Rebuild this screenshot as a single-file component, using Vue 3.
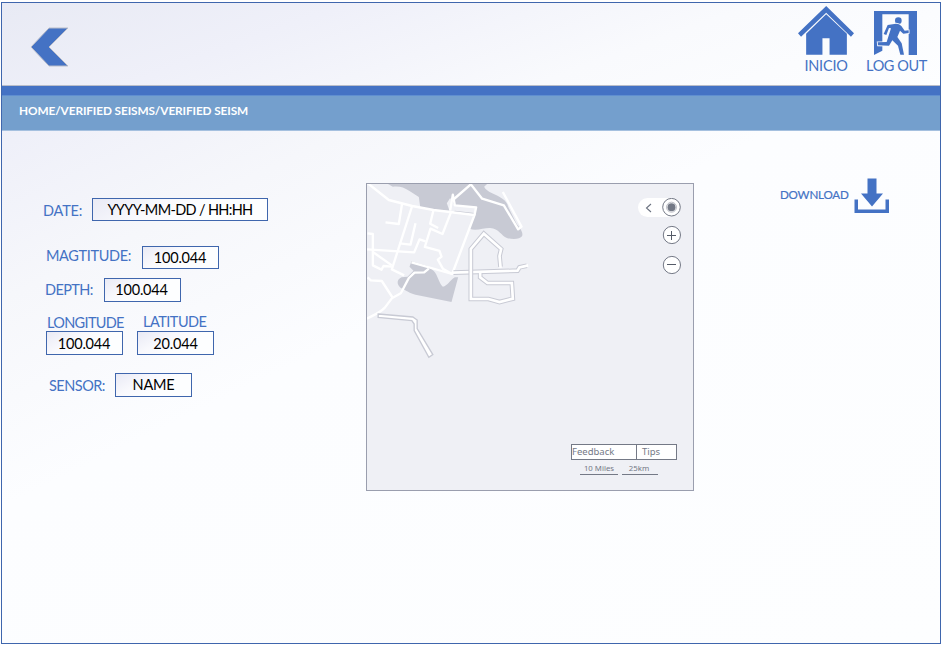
<script setup>
const roads = [
  'M20 12L88 66L158 84L222 96L345 111L278 288L156 253',
  'M128 75L118 138L78 133',
  'M158 84L97 274L134 292',
  'M168 136L153 200L120 196',
  'M20 214L164 223L180 184L198 190',
  'M24 166L40 168L40 262L66 275L72 264L97 266',
  'M40 222L97 262',
  'M222 96L212 137L236 150',
  'M274 104L249 168L213 152L196 207L240 219L246 236L235 245L250 272L278 288',
  'M272 98L280 50L286 82L350 88L345 111',
  'M280 66L334 19L368 62L433 82L476 154L486 146L430 42',
  'M208 272L194 283L165 284L148 300L124 346L97 361L76 389C60 406 40 412 22 422',
  'M24 298L34 307L67 309L100 360',
]
const outlined = [
  'M282 284L474 278L480 268L502 263',
  'M423 266L420 234L425 213L373 167L334 213L334 363L387 363L420 372L460 362L457 315L384 315L362 298L362 286',
]
</script>

<template>
  <div class="frame">
    <header class="top">
      <svg class="back" viewBox="0 0 40 40" width="40" height="40">
        <path d="M19 1H38L19 20L38 39H19L1 20Z" fill="#4472c4" stroke="#b9bdc9" stroke-width="1" />
      </svg>
      <nav class="nav">
        <div class="item home">
          <svg width="56" height="49" viewBox="0 0 165 147" preserveAspectRatio="none">
            <path d="M0 82L83 0L165 82L156 92L83 20L9 92Z" />
            <path d="M24 83L83 25L144 83V146H93V97H72V146H24Z" />
          </svg>
          <span>INICIO</span>
        </div>
        <div class="item logout">
          <svg width="43" height="44" viewBox="279 33 129 132">
            <path d="M279 33H408V165H383V43H304V152L279 165Z" />
            <g class="runner">
              <circle cx="352" cy="62" r="10" />
              <path d="M320 75L345 71Q355 71 361 78L371 92L383 91V99L367 101L357 92L349 111L362 130L369 164H358L351 137L334 121L324 137L291 136L290 127L317 126L330 85L324 84L316 105L308 102Z" />
            </g>
          </svg>
          <span>LOG OUT</span>
        </div>
      </nav>
    </header>
    <div class="stripe"></div>
    <div class="crumb"><span>HOME/VERIFIED SEISMS/VERIFIED SEISM</span></div>

    <main class="main">
      <section class="form">
        <div class="row date"><label>DATE:</label><div class="box"><span>YYYY-MM-DD / HH:HH</span></div></div>
        <div class="row mag"><label>MAGTITUDE:</label><div class="box"><span>100.044</span></div></div>
        <div class="row depth"><label>DEPTH:</label><div class="box"><span>100.044</span></div></div>
        <div class="coords">
          <div class="col lon"><label>LONGITUDE</label><div class="box"><span>100.044</span></div></div>
          <div class="col lat"><label>LATITUDE</label><div class="box"><span>20.044</span></div></div>
        </div>
        <div class="row sensor"><label>SENSOR:</label><div class="box"><span>NAME</span></div></div>
      </section>

      <section class="map">
        <svg class="terrain" width="326" height="306" viewBox="1 1 326 306">
          <g transform="translate(-6.5 -5) scale(.33333)">
            <path fill="#c8cad4" d="M80 15L100 26C122 24 132 28 150 39L178 57L182 86L222 96L272 98L300 84L286 82L350 88L330 152C350 160 374 149 392 150C418 151 426 174 442 180C460 185 482 184 488 174C492 160 478 148 470 135L446 86C442 66 420 56 398 46Q378 36 374 26L386 15Z" />
            <path fill="#eff0f5" d="M272 60L262 76L270 98L282 98L300 85L284 80Z" />
            <path fill="#c8cad4" d="M286 98L345 105L340 112L282 103Z" />
            <path fill="#c8cad4" d="M156 250L204 264L222 278C236 292 236 312 250 326C264 324 270 308 286 298L296 298L276 372L168 350C148 346 140 336 124 330C110 320 112 304 126 298L144 296L162 278L150 266Z" />
            <path v-for="d in roads" :key="d" :d="d" class="road" />
            <g v-for="d in outlined" :key="d">
              <path :d="d" class="casing" /><path :d="d" class="core" />
            </g>
            <path d="M56 408L160 417L173 426V452L220 530L208 538L164 458V438L157 428L56 418Z" fill="#fff" stroke="#c8cad4" stroke-width="4" />
          </g>
        </svg>
        <div class="controls">
          <svg width="44" height="20" viewBox="0 0 44 20">
            <path d="M9.500 0H33V19H9.500A9.500 9.500 0 0 1 9.500 0Z" fill="#fff" />
            <path d="M13 6L8.500 10L13 14" fill="none" stroke="#6b7280" stroke-width="1.100" />
            <circle cx="33.500" cy="9.200" r="8.800" class="ring" />
            <circle cx="33.500" cy="9.200" r="5" fill="#fff" stroke="#a0a4ae" stroke-width=".7" />
            <circle cx="33.500" cy="9.200" r="4" fill="#747986" />
          </svg>
          <svg class="zoom" width="20" height="20" viewBox="0 0 20 20">
            <circle cx="9.900" cy="10" r="8.600" class="ring" /><path d="M5 10.500H14M9.500 6V15" class="sign" />
          </svg>
          <svg class="zoom out" width="20" height="20" viewBox="0 0 20 20">
            <circle cx="9.900" cy="10" r="8.600" class="ring" /><path d="M5 9.500H14" class="sign" />
          </svg>
        </div>
        <div class="legend">
          <div class="links"><span class="feedback">Feedback</span><span class="tips">Tips</span></div>
          <div class="scale"><span class="miles">10 Miles</span><span class="km">25km</span></div>
        </div>
      </section>

      <section class="download">
        <span>DOWNLOAD</span>
        <svg width="36" height="36" viewBox="0 0 36 36">
          <path d="M13.500 .5H22.500V15.500H29L18 28.500L7 15.500H13.500Z" />
          <path d="M.5 21.500H4V31.500H31.500V21.500H35V35H.5Z" />
        </svg>
      </section>
    </main>
  </div>
</template>

<style>
body { margin: 0; background: #fff; }
</style>

<style scoped>
.frame {
  box-sizing: border-box;
  width: 940px;
  height: 642px;
  margin: 2px 0 0 1px;
  border: 1px solid #3f66ad;
  background: linear-gradient(154deg, #e8eaf4 0%, #eff0f9 13%, #f6f7fb 27%, #fcfdff 46%, #fdfeff 100%);
  font-family: Lato, "Liberation Sans", sans-serif;
  color: #4472c4;
  display: flow-root;
  white-space: nowrap;
}
.top { height: 82px; display: flex; justify-content: space-between; background: linear-gradient(160deg, #e8eaf4 0%, #eff0f9 30%, #f9fafd 65%, #fdfeff 100%); }
.back { margin: 24px 0 0 28px; }
.nav { display: flex; margin-right: 13px; gap: 12px; }
.nav svg { fill: #4472c4; display: block; }
.item { display: flex; flex-direction: column; align-items: center; font-size: 14.500px; letter-spacing: -.4px; line-height: 18px; }
.home { padding-top: 3px; }
.home span { margin-top: 2px; letter-spacing: -.2px; }
.logout { padding-top: 8px; }
.logout svg { margin-right: 3px; }
.logout span { margin-top: 2px; }
.runner { stroke: #f9fafd; stroke-width: 5px; paint-order: stroke; }
.stripe { height: 9px; background: #4472c4; border-top: 1px solid #b9bdc9; }
.crumb {
  box-sizing: border-box; height: 36px; padding-left: 17px;
  background: #749fcd; border-top: 1px solid #5f8ed0; border-bottom: 1px solid #a5c0df;
  color: #fff; font-weight: 700; font-size: 11.800px; letter-spacing: -.1px; line-height: 30px;
}
.main { display: flex; align-items: flex-start; }
.form { width: 364px; padding-top: 67px; font-size: 14.500px; letter-spacing: -.35px; }
.row { display: flex; height: 24px; }
.row label { line-height: 24px; }
.box {
  box-sizing: border-box; width: 77px; height: 24px; border: 1px solid #3f66ad;
  background: linear-gradient(150deg, #e9eaf5 0%, #f9f9fd 35%, #fdfeff 60%);
  color: #000; text-align: center; line-height: 23px; letter-spacing: -.2px;
}
.date, .mag, .date .box, .mag .box { height: 23px; }
.date label { width: 49px; padding-left: 41px; line-height: 25px; letter-spacing: -.2px; }
.date .box { width: 176px; line-height: 22px; letter-spacing: -.66px; }
.mag { margin-top: 25px; }
.mag label { width: 96px; padding-left: 44px; line-height: 20px; }
.mag .box { line-height: 22px; text-indent: -1px; }
.depth { margin-top: 9px; }
.depth label { width: 59px; padding-left: 43px; line-height: 24px; letter-spacing: -.6px; }
.depth .box { line-height: 22px; text-indent: -2px; }
.coords { display: flex; gap: 14px; padding-left: 44px; height: 53px; }
.col { width: 77px; }
.col label { display: block; height: 29px; line-height: 42px; padding-left: 1px; letter-spacing: -.68px; }
.lon .box { text-indent: -1px; }
.lat label { line-height: 40px; padding-left: 6px; letter-spacing: -.5px; }
.sensor { margin-top: 18px; }
.sensor label { width: 66px; padding-left: 47px; letter-spacing: -.5px; line-height: 25px; }
.sensor .box { line-height: 22px; }
.map {
  box-sizing: border-box; width: 328px; height: 308px; margin-top: 52px; display: grid;
  border: 1px solid #9a9eae; background: #eff0f5; font-family: "Noto Sans", sans-serif; color: #747986;
}
.map > * { grid-area: 1 / 1; }
.terrain { display: block; }
.road { fill: none; stroke: #fff; stroke-width: 7; stroke-linejoin: round; }
.casing { fill: none; stroke: #c8cad4; stroke-width: 14; }
.core { fill: none; stroke: #fff; stroke-width: 8; stroke-linecap: square; }
.controls { justify-self: end; padding: 14px 11px 0 0; display: flex; flex-direction: column; align-items: flex-end; height: 100px; }
.controls svg { display: block; flex: none; }
.controls .zoom { margin-top: 7px; }
.controls .out { margin-top: 10px; }
.ring { fill: #fff; stroke: #747986; stroke-width: 1; }
.sign { fill: none; stroke: #555b68; stroke-width: 1; }
.legend { align-self: end; justify-self: end; width: 106px; margin: 0 16px 15px 0; }
.links { display: flex; box-sizing: border-box; height: 16px; border: 1px solid #747986; background: #fff; font-size: 9.500px; line-height: 14px; }
.feedback { box-sizing: border-box; width: 65px; border-right: 1px solid #747986; }
.tips { padding-left: 5px; }
.scale { display: flex; gap: 4px; padding-left: 9px; font-size: 7.800px; line-height: 14px; text-align: center; height: 14px; margin-top: 1px; }
.scale span { border-bottom: 1px solid #747986; height: 13px; line-height: 14px; }
.miles { width: 38px; }
.km { width: 36px; text-indent: -2px; }
.download { display: flex; margin: 47px 0 0 86px; gap: 5px; font-size: 11.600px; letter-spacing: -.2px; line-height: 34px; -webkit-text-stroke: .2px #4472c4; }
.download svg { fill: #4472c4; display: block; }
</style>
